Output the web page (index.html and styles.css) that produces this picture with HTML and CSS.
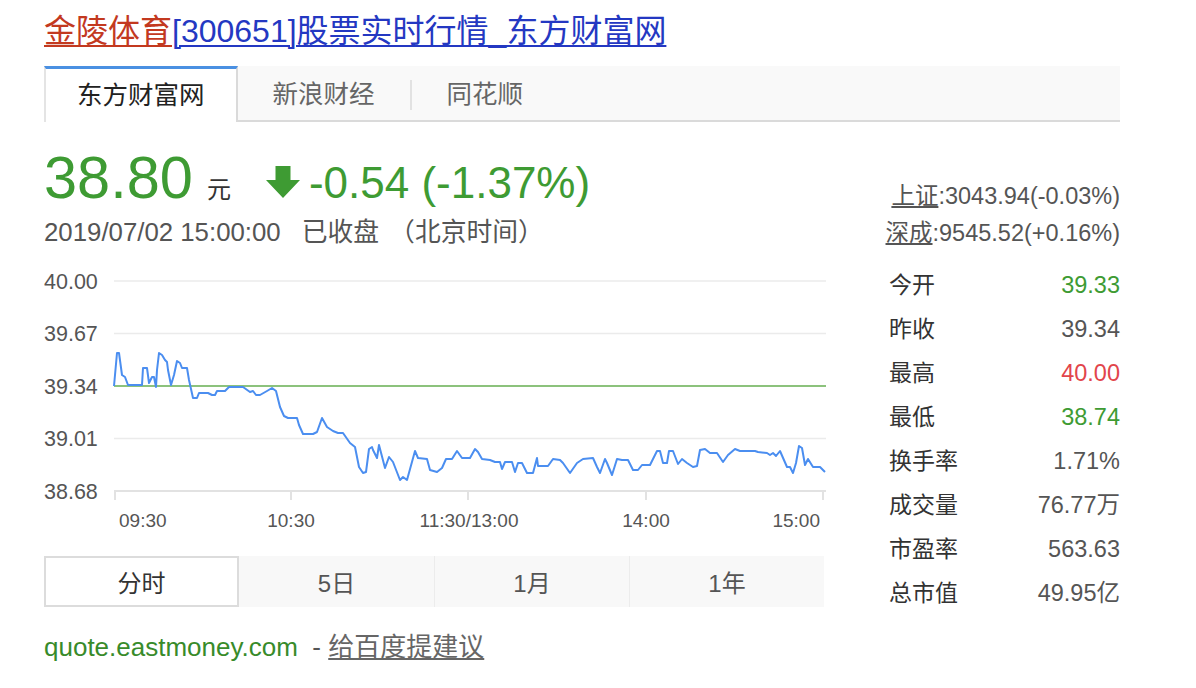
FILE: index.html
```html
<!DOCTYPE html>
<html lang="zh-CN">
<head>
<meta charset="utf-8">
<title>金陵体育[300651]股票实时行情_东方财富网</title>
<link rel="stylesheet" href="styles.css">
</head>
<body>
<div class="page">
  <h1 class="title"><a class="t-em" href="#">金陵体育</a><a class="t-link" href="#">[300651]股票实时行情_东方财富网</a></h1>

  <div class="tabs">
    <div class="tab active">东方财富网</div>
    <div class="tab">新浪财经</div>
    <span class="tab-sep"></span>
    <div class="tab">同花顺</div>
  </div>

  <div class="main">
    <div class="left">
      <div class="price-row">
        <span class="price">38.80</span>
        <span class="unit">元</span>
        <svg class="arrow" width="34" height="32" viewBox="0 0 34 32"><path d="M9.5 0H24.5V14H34L17 32L0 14H9.5Z" fill="#3e9b33"/></svg>
        <span class="change">-0.54 (-1.37%)</span>
      </div>
      <div class="date-row">2019/07/02 15:00:00<span class="status">已收盘</span><span class="zone">（北京时间）</span></div>

      <svg class="chart" width="782" height="291" viewBox="44 249 782 291">
        <g class="grid">
          <line x1="114" y1="281" x2="826" y2="281"/>
          <line x1="114" y1="333.5" x2="826" y2="333.5"/>
          <line x1="114" y1="438.5" x2="826" y2="438.5"/>
        </g>
        <g class="axis">
          <line x1="114" y1="491" x2="826" y2="491"/>
          <line x1="115" y1="491" x2="115" y2="500"/>
          <line x1="291" y1="491" x2="291" y2="500"/>
          <line x1="468" y1="491" x2="468" y2="500"/>
          <line x1="646" y1="491" x2="646" y2="500"/>
          <line x1="823" y1="491" x2="823" y2="500"/>
        </g>
        <line class="base" x1="114" y1="386" x2="826" y2="386"/>
        <polyline class="trend" points="114,386 117,353 119,353 122,375 125,377 128,385 142,385 143,368 147,368 149,383 152,377 154,377 156,387 157,370 159,353 162,355 165,360 167,362 168,370 171,385 174,375 177,361 180,363 182,368 187,368 189,380 193,398 197,398 199,393 208,393 212,395 215,395 217,391 225,391 229,387 243,387 250,392 253,391 256,395 260,395 267,391 272,388 276,391 280,407 284,416 288,418 297,418 299,425 303,434 313,434 317,432 322,418 327,427 333,431 338,433 343,433 350,443 355,447 359,467 363,473 366,472 369,449 372,447 373,450 377,458 379,445 385,468 389,457 393,462 400,480 403,477 407,480 415,451 418,458 427,459 430,470 437,472 442,468 446,459 452,459 457,451 462,458 470,458 475,449 478,452 482,459 490,460 495,462 500,462 502,469 505,462 512,462 515,472 518,463 522,463 527,473 533,473 537,458 538,466 548,466 553,459 560,460 563,463 570,473 577,463 583,459 593,458 597,467 600,473 605,459 607,463 612,475 617,459 622,460 628,460 633,470 638,470 642,465 650,465 657,451 660,451 663,463 667,463 669,451 673,451 678,464 682,459 687,463 693,467 697,466 700,450 705,449 710,453 717,453 723,462 728,455 735,449 740,451 755,451 758,452 767,453 770,455 773,453 776,456 780,451 787,467 790,467 793,473 796,463 799,446 802,448 805,465 808,459 813,467 820,467 825,472"/>
        <g class="ylab">
          <text x="44" y="288.5">40.00</text>
          <text x="44" y="341">39.67</text>
          <text x="44" y="393.5">39.34</text>
          <text x="44" y="446">39.01</text>
          <text x="44" y="498.5">38.68</text>
        </g>
        <g class="xlab">
          <text x="119" y="527">09:30</text>
          <text x="291" y="527" text-anchor="middle">10:30</text>
          <text x="469" y="527" text-anchor="middle">11:30/13:00</text>
          <text x="646" y="527" text-anchor="middle">14:00</text>
          <text x="820" y="527" text-anchor="end">15:00</text>
        </g>
      </svg>

      <div class="periods">
        <div class="period active">分时</div>
        <div class="period">5日</div>
        <div class="period">1月</div>
        <div class="period">1年</div>
      </div>

      <div class="footer"><span class="site">quote.eastmoney.com</span>&nbsp; - <a class="advice" href="#">给百度提建议</a></div>
    </div>

    <div class="right">
      <div class="indices">
        <div class="idx"><a href="#">上证</a>:3043.94(-0.03%)</div>
        <div class="idx"><a href="#">深成</a>:9545.52(+0.16%)</div>
      </div>
      <ul class="stats">
        <li><span class="k">今开</span><span class="v up-green">39.33</span></li>
        <li><span class="k">昨收</span><span class="v">39.34</span></li>
        <li><span class="k">最高</span><span class="v red">40.00</span></li>
        <li><span class="k">最低</span><span class="v up-green">38.74</span></li>
        <li><span class="k">换手率</span><span class="v">1.71%</span></li>
        <li><span class="k">成交量</span><span class="v">76.77万</span></li>
        <li><span class="k">市盈率</span><span class="v">563.63</span></li>
        <li><span class="k">总市值</span><span class="v">49.95亿</span></li>
      </ul>
    </div>
  </div>
</div>
</body>
</html>
```

FILE: styles.css
```css
html, body {
  margin: 0;
  padding: 0;
  background: #ffffff;
}

body {
  font-family: "Liberation Sans", "Noto Sans CJK SC", sans-serif;
  color: #333;
}

.page {
  width: 1076px;
  padding-left: 44px;
}

.title {
  margin: 0;
  height: 66px;
  line-height: 62px;
  font-size: 32px;
  font-weight: normal;
  white-space: nowrap;
}

.title a {
  text-decoration: underline;
  text-decoration-thickness: 2px;
  text-underline-offset: 3px;
}

.t-em {
  color: #c3391f;
}

.t-link {
  color: #2438c2;
}

/* tabs */
.tabs {
  display: flex;
  height: 56px;
  box-sizing: border-box;
  background: #f9f9f9;
  border-bottom: 2px solid #dadada;
}

.tab {
  padding: 3px 35px 0;
  line-height: 51px;
  font-size: 25.5px;
  color: #666;
}

.tab.active {
  padding: 0 31px;
  line-height: 53px;
  background: #fff;
  color: #222;
  border-top: 3px solid #4a90e2;
  border-left: 2px solid #e4e4e4;
  border-right: 2px solid #dadada;
  margin-bottom: -2px;
}

.tab-sep {
  width: 2px;
  height: 30px;
  margin-top: 14px;
  background: #e2e2e2;
}

/* main */
.main {
  display: flex;
}

.left {
  width: 782px;
}

.right {
  width: 233px;
  margin-left: auto;
  padding-top: 56px;
}

.price-row {
  display: flex;
  align-items: baseline;
  padding-top: 23px;
  white-space: nowrap;
}

.price {
  font-size: 59.5px;
  line-height: 66px;
  color: #3e9b33;
}

.unit {
  font-size: 24px;
  line-height: 30px;
  color: #333;
  margin-left: 14px;
}

.arrow {
  margin-left: 35px;
  margin-bottom: 3px;
}

.change {
  font-size: 44px;
  line-height: 50px;
  color: #3e9b33;
  margin-left: 9px;
}

.date-row {
  margin-top: 4px;
  font-size: 25.8px;
  line-height: 34px;
  color: #555;
  white-space: nowrap;
}

.status {
  margin-left: 21px;
}

.zone {
  margin-left: 10px;
}

/* chart */
.chart {
  display: block;
}

.grid line {
  stroke: #ebebeb;
  stroke-width: 1.5;
}

.axis line {
  stroke: #e2e2e2;
  stroke-width: 2;
}

.base {
  stroke: #8cc27c;
  stroke-width: 2;
}

.trend {
  fill: none;
  stroke: #4b8ef0;
  stroke-width: 2;
  stroke-linejoin: round;
}

.ylab text {
  font-family: "Liberation Sans", sans-serif;
  font-size: 21.5px;
  fill: #555;
}

.xlab text {
  font-family: "Liberation Sans", sans-serif;
  font-size: 19px;
  fill: #555;
}

/* periods */
.periods {
  margin-top: 16px;
  width: 780px;
  height: 51px;
  display: grid;
  grid-template-columns: repeat(4, 1fr);
  background: #f8f8f8;
}

.period {
  display: flex;
  align-items: center;
  justify-content: center;
  font-size: 24px;
  color: #555;
  box-sizing: border-box;
}

.period + .period + .period {
  border-left: 1px solid #ececec;
}

.period.active {
  background: #fff;
  color: #333;
  border: 2px solid #dcdcdc;
}

/* footer */
.footer {
  margin-top: 20px;
  font-size: 26px;
  line-height: 40px;
  color: #555;
  white-space: nowrap;
}

.site {
  color: #388b2a;
}

.advice {
  color: #666;
  text-decoration: underline;
}

/* right column */
.indices {
  display: flex;
  flex-direction: column;
  align-items: flex-end;
}

.idx {
  font-size: 23.5px;
  line-height: 37px;
  color: #555;
  white-space: nowrap;
}

.idx a {
  color: #555;
  text-decoration: underline;
}

.stats {
  list-style: none;
  margin: 11px 0 0;
  padding: 0;
}

.stats li {
  display: flex;
  justify-content: space-between;
  height: 44px;
  line-height: 44px;
  padding-left: 2px;
}

.k {
  font-size: 23px;
  color: #333;
}

.v {
  font-size: 23.5px;
  color: #555;
}

.up-green {
  color: #3e9b33;
}

.red {
  color: #e2454b;
}
```
